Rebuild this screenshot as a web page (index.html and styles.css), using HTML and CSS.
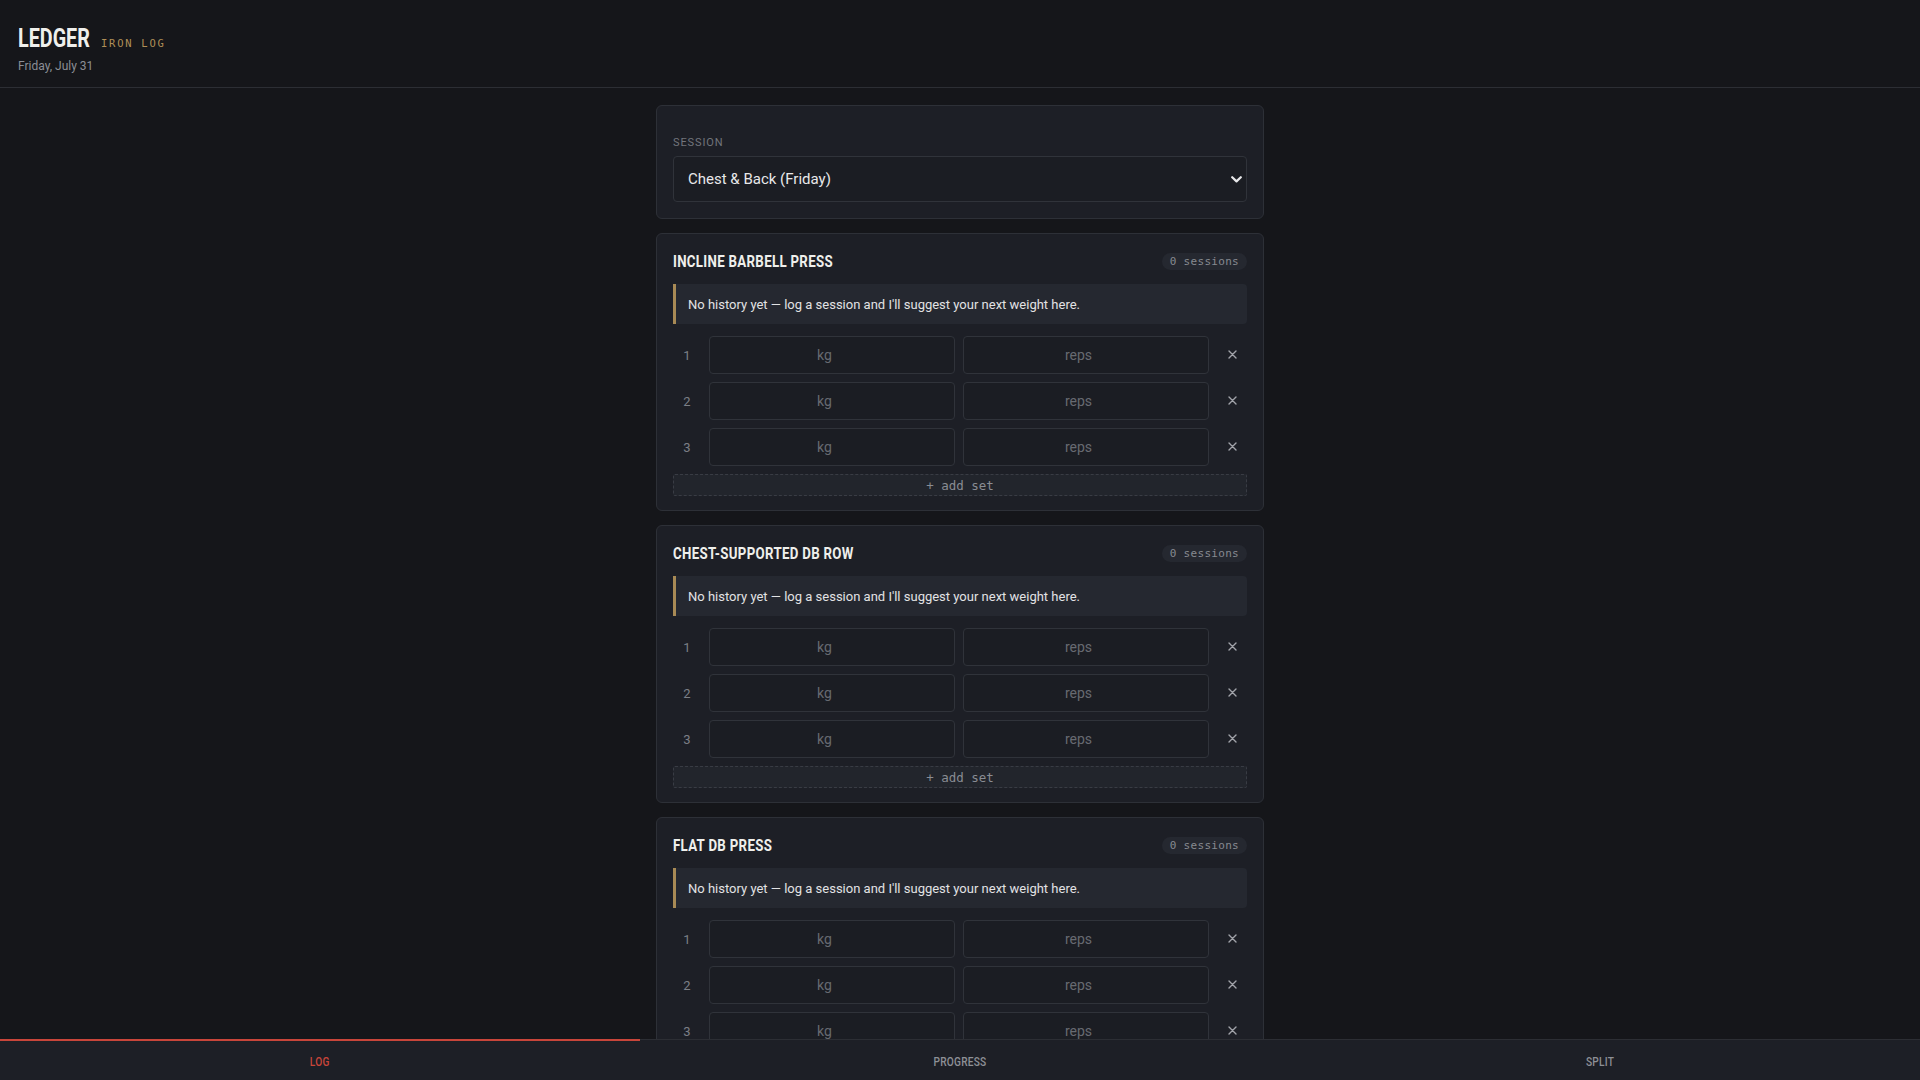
FILE: index.html
```html
<!DOCTYPE html>
<html lang="en">
<head>
<meta charset="utf-8">
<title>Ledger — Iron Log</title>
<link rel="stylesheet" href="styles.css">
</head>
<body>
<div class="app">
  <header class="topbar">
    <div class="brand">
      <h1 class="logo"><span class="narrow">LEDGER</span></h1>
      <span class="tag">IRON LOG</span>
    </div>
    <div class="date">Friday, July 31</div>
  </header>

  <main class="content">
    <div class="column">
      <section class="card session-card">
        <label class="field-label" for="session">Session</label>
        <div class="select-wrap">
          <select id="session" class="select">
            <option>Chest &amp; Back (Friday)</option>
          </select>
          <svg class="chev" width="11" height="7" viewBox="0 0 11 7"><path d="M1.2 1.2 L5.5 5.4 L9.8 1.2" fill="none" stroke="#e8e8ea" stroke-width="2.2" stroke-linecap="round" stroke-linejoin="round"/></svg>
        </div>
      </section>

      <section class="card exercise">
        <div class="ex-head">
          <h2 class="ex-title"><span class="narrow">Incline Barbell Press</span></h2>
          <span class="pill">0 sessions</span>
        </div>
        <div class="note">No history yet — log a session and I'll suggest your next weight here.</div>
        <div class="sets">
          <div class="set-row"><span class="set-num">1</span><input class="field" type="number" placeholder="kg"><input class="field" type="number" placeholder="reps"><button class="del"><svg width="9" height="9" viewBox="0 0 9 9"><path d="M1 1 L8 8 M8 1 L1 8" stroke="#a2a4aa" stroke-width="1.4" stroke-linecap="round"/></svg></button></div>
          <div class="set-row"><span class="set-num">2</span><input class="field" type="number" placeholder="kg"><input class="field" type="number" placeholder="reps"><button class="del"><svg width="9" height="9" viewBox="0 0 9 9"><path d="M1 1 L8 8 M8 1 L1 8" stroke="#a2a4aa" stroke-width="1.4" stroke-linecap="round"/></svg></button></div>
          <div class="set-row"><span class="set-num">3</span><input class="field" type="number" placeholder="kg"><input class="field" type="number" placeholder="reps"><button class="del"><svg width="9" height="9" viewBox="0 0 9 9"><path d="M1 1 L8 8 M8 1 L1 8" stroke="#a2a4aa" stroke-width="1.4" stroke-linecap="round"/></svg></button></div>
        </div>
        <button class="add-set">+ add set</button>
      </section>

      <section class="card exercise">
        <div class="ex-head">
          <h2 class="ex-title"><span class="narrow">Chest-Supported DB Row</span></h2>
          <span class="pill">0 sessions</span>
        </div>
        <div class="note">No history yet — log a session and I'll suggest your next weight here.</div>
        <div class="sets">
          <div class="set-row"><span class="set-num">1</span><input class="field" type="number" placeholder="kg"><input class="field" type="number" placeholder="reps"><button class="del"><svg width="9" height="9" viewBox="0 0 9 9"><path d="M1 1 L8 8 M8 1 L1 8" stroke="#a2a4aa" stroke-width="1.4" stroke-linecap="round"/></svg></button></div>
          <div class="set-row"><span class="set-num">2</span><input class="field" type="number" placeholder="kg"><input class="field" type="number" placeholder="reps"><button class="del"><svg width="9" height="9" viewBox="0 0 9 9"><path d="M1 1 L8 8 M8 1 L1 8" stroke="#a2a4aa" stroke-width="1.4" stroke-linecap="round"/></svg></button></div>
          <div class="set-row"><span class="set-num">3</span><input class="field" type="number" placeholder="kg"><input class="field" type="number" placeholder="reps"><button class="del"><svg width="9" height="9" viewBox="0 0 9 9"><path d="M1 1 L8 8 M8 1 L1 8" stroke="#a2a4aa" stroke-width="1.4" stroke-linecap="round"/></svg></button></div>
        </div>
        <button class="add-set">+ add set</button>
      </section>

      <section class="card exercise">
        <div class="ex-head">
          <h2 class="ex-title"><span class="narrow">Flat DB Press</span></h2>
          <span class="pill">0 sessions</span>
        </div>
        <div class="note">No history yet — log a session and I'll suggest your next weight here.</div>
        <div class="sets">
          <div class="set-row"><span class="set-num">1</span><input class="field" type="number" placeholder="kg"><input class="field" type="number" placeholder="reps"><button class="del"><svg width="9" height="9" viewBox="0 0 9 9"><path d="M1 1 L8 8 M8 1 L1 8" stroke="#a2a4aa" stroke-width="1.4" stroke-linecap="round"/></svg></button></div>
          <div class="set-row"><span class="set-num">2</span><input class="field" type="number" placeholder="kg"><input class="field" type="number" placeholder="reps"><button class="del"><svg width="9" height="9" viewBox="0 0 9 9"><path d="M1 1 L8 8 M8 1 L1 8" stroke="#a2a4aa" stroke-width="1.4" stroke-linecap="round"/></svg></button></div>
          <div class="set-row"><span class="set-num">3</span><input class="field" type="number" placeholder="kg"><input class="field" type="number" placeholder="reps"><button class="del"><svg width="9" height="9" viewBox="0 0 9 9"><path d="M1 1 L8 8 M8 1 L1 8" stroke="#a2a4aa" stroke-width="1.4" stroke-linecap="round"/></svg></button></div>
        </div>
        <button class="add-set">+ add set</button>
      </section>
    </div>
  </main>

  <nav class="tabs">
    <a class="tab active"><span class="narrow">LOG</span></a>
    <a class="tab"><span class="narrow">PROGRESS</span></a>
    <a class="tab"><span class="narrow">SPLIT</span></a>
  </nav>
</div>
</body>
</html>
```

FILE: styles.css
```css
* { box-sizing: border-box; }

html, body {
  margin: 0;
  height: 100%;
  background: #15161a;
  color: #e6e6e8;
  font-family: "Roboto", "Noto Sans", sans-serif;
}

.app {
  height: 100vh;
  display: flex;
  flex-direction: column;
  overflow: hidden;
}

/* condensed display face (no condensed font installed: narrow by transform) */
.narrow {
  display: inline-block;
  transform: scaleX(0.78);
  transform-origin: 0 50%;
}

/* header */
.topbar {
  padding: 24px 18px 13px;
  border-bottom: 1px solid #2c2e34;
  flex: none;
}
.brand {
  display: flex;
  align-items: baseline;
}
.logo {
  margin: 0;
  width: 83px;
  font-family: "Roboto", sans-serif;
  font-weight: 700;
  font-size: 25px;
  line-height: 30px;
  color: #efefec;
  white-space: nowrap;
}
.logo .narrow { transform: scaleX(0.79); }
.tag {
  font-family: "DejaVu Sans Mono", "Liberation Mono", monospace;
  font-size: 10.5px;
  letter-spacing: 1.75px;
  color: #b08f57;
}
.date {
  margin-top: 4px;
  font-size: 12px;
  line-height: 16px;
  color: #8b8e95;
}

/* content */
.content {
  flex: 1;
  overflow: hidden;
  padding-top: 17px;
}
.column {
  width: 608px;
  margin: 0 auto;
  display: flex;
  flex-direction: column;
  gap: 14px;
}
.card {
  background: #1d1f26;
  border: 1px solid #2d3037;
  border-radius: 6px;
  padding: 16px;
}

.session-card { padding-top: 29px; }
.field-label {
  display: block;
  font-size: 11px;
  line-height: 16px;
  letter-spacing: 0.9px;
  text-transform: uppercase;
  color: #72757c;
}
.select-wrap {
  position: relative;
  margin-top: 5px;
}
.select {
  display: block;
  width: 100%;
  height: 46px;
  appearance: none;
  -webkit-appearance: none;
  background: #1b1d23;
  border: 1px solid #30333a;
  border-radius: 4px;
  color: #e8e8ea;
  font-family: "Roboto", "Noto Sans", sans-serif;
  font-size: 15px;
  padding: 0 14px;
  outline: none;
}
.chev {
  position: absolute;
  right: 5px;
  top: 20px;
  pointer-events: none;
}

/* exercise card */
.exercise { padding-bottom: 14px; }
.ex-head {
  display: flex;
  align-items: center;
  justify-content: space-between;
  height: 22px;
}
.ex-title {
  margin: 0;
  font-family: "Roboto", sans-serif;
  font-weight: 700;
  font-size: 17px;
  letter-spacing: 0.4px;
  text-transform: uppercase;
  color: #efefec;
  white-space: nowrap;
}
.pill {
  font-family: "DejaVu Sans Mono", "Liberation Mono", monospace;
  font-size: 11px;
  line-height: 17px;
  height: 17px;
  padding: 0 8px;
  border-radius: 9px;
  background: #252830;
  color: #878a91;
  letter-spacing: 0.3px;
}
.note {
  margin-top: 12px;
  height: 40px;
  display: flex;
  align-items: center;
  background: #252830;
  border-left: 3px solid #a88a55;
  border-radius: 0 4px 4px 0;
  padding-left: 12px;
  font-size: 13px;
  color: #e2e2e4;
}
.sets {
  margin-top: 12px;
  display: flex;
  flex-direction: column;
  gap: 8px;
}
.set-row {
  display: grid;
  grid-template-columns: 28px 1fr 1fr 30px;
  gap: 8px;
  align-items: center;
}
.set-num {
  text-align: center;
  font-size: 13px;
  color: #7c7f86;
}
.field {
  height: 38px;
  width: 100%;
  min-width: 0;
  background: #1b1d23;
  border: 1px solid #30333a;
  border-radius: 4px;
  color: #e8e8ea;
  font-family: "Roboto", "Noto Sans", sans-serif;
  font-size: 14px;
  text-align: center;
  padding: 0 8px;
  outline: none;
}
.field::placeholder { color: #676a71; }
.del {
  display: flex;
  align-items: center;
  justify-content: center;
  height: 38px;
  background: none;
  border: none;
  padding: 0 0 2px;
  cursor: pointer;
}
.add-set {
  display: block;
  width: 100%;
  height: 22px;
  margin-top: 8px;
  background: #22252c;
  border: 1px dashed #393c44;
  border-radius: 2px;
  color: #898c93;
  font-family: "DejaVu Sans Mono", "Liberation Mono", monospace;
  font-size: 12.5px;
  padding: 0;
  cursor: pointer;
}

/* bottom tabs */
.tabs {
  flex: none;
  height: 41px;
  display: grid;
  grid-template-columns: 1fr 1fr 1fr;
  background: #1d1f26;
  border-top: 1px solid #2c2e34;
}
.tab {
  display: flex;
  align-items: center;
  justify-content: center;
  padding-top: 2px;
  border-top: 2px solid transparent;
  margin-top: -1px;
  font-family: "Roboto", sans-serif;
  font-weight: 500;
  font-size: 13px;
  letter-spacing: 0.3px;
  color: #8d9096;
}
.tab .narrow { transform-origin: 50% 50%; }
.tab.active {
  border-top-color: #c8453a;
  color: #c8453a;
}
```
